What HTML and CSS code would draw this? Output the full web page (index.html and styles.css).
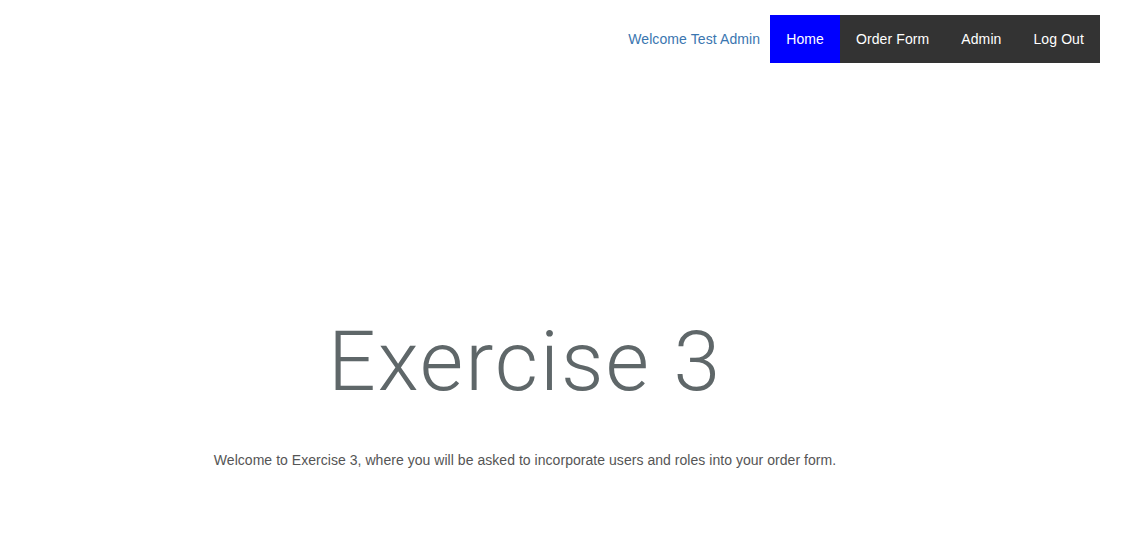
FILE: index.html
```html
<!DOCTYPE html>
<html>
<head>
<meta charset="utf-8">
<link rel="stylesheet" href="styles.css">
</head>
<body>
<header class="topbar">
  <span class="welcome">Welcome Test Admin</span>
  <nav class="nav">
    <a class="nav-item active" href="#">Home</a>
    <a class="nav-item" href="#">Order Form</a>
    <a class="nav-item" href="#">Admin</a>
    <a class="nav-item" href="#">Log Out</a>
  </nav>
</header>
<main class="content">
  <h1 class="title">Exercise 3</h1>
  <p class="intro">Welcome to Exercise 3, where you will be asked to incorporate users and roles into your order form.</p>
</main>
</body>
</html>
```

FILE: styles.css
```css
html, body {
  margin: 0;
  padding: 0;
  background: #fff;
}
body {
  font-family: "Liberation Sans", Arial, sans-serif;
}
.topbar {
  display: flex;
  justify-content: flex-end;
  align-items: center;
  height: 48px;
  padding: 15px 38px 0 0;
}
.welcome {
  color: #3a76b0;
  font-size: 14px;
  letter-spacing: 0.1px;
  margin-right: 10px;
}
.nav {
  display: flex;
  background: #333333;
  height: 48px;
}
.nav-item {
  display: flex;
  align-items: center;
  padding: 0 16px;
  color: #fff;
  text-decoration: none;
  font-size: 14px;
  letter-spacing: 0.1px;
}
.nav-item.active {
  background: #0000ff;
}
.content {
  width: 970px;
  margin-left: 40px;
  text-align: center;
  padding-top: 244px;
}
.title {
  margin: 0;
  font-family: Roboto, "Liberation Sans", sans-serif;
  font-weight: 300;
  font-size: 84px;
  letter-spacing: 2px;
  line-height: 110px;
  color: #5f6769;
}
.intro {
  margin: 35px 0 0;
  font-size: 14px;
  letter-spacing: 0.04px;
  color: #555;
}
```
